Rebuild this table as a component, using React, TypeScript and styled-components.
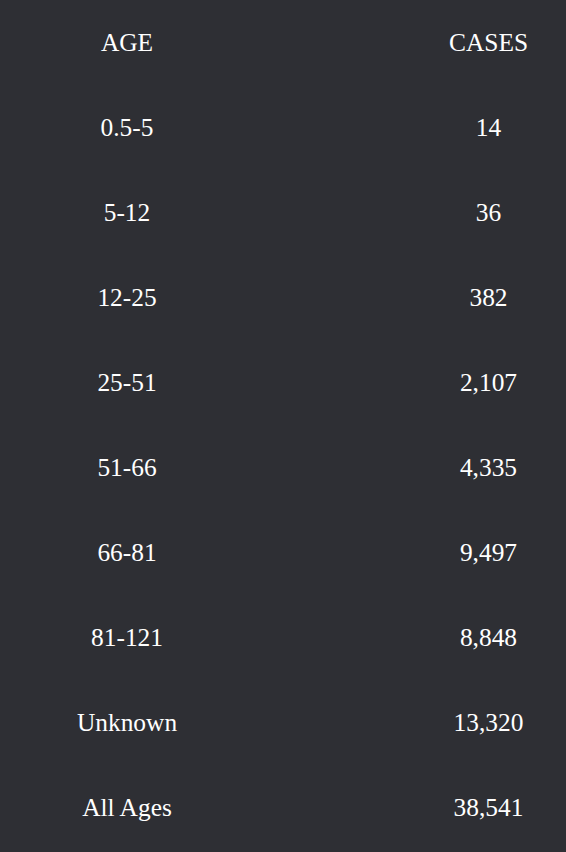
import React from "react";
import styled, { createGlobalStyle } from "styled-components";

const GlobalStyle = createGlobalStyle`
  html, body {
    margin: 0;
    padding: 0;
    background: #2e2f34;
  }
  body {
    font-family: "Liberation Serif", "Times New Roman", serif;
    color: #ffffff;
  }
`;

const Table = styled.div`
  display: flex;
  flex-direction: column;
  width: 566px;
  background: #2e2f34;
`;

const Row = styled.div`
  display: grid;
  grid-template-columns: 254px 155px;
  justify-content: space-between;
  align-items: center;
  height: 85px;
`;

const Cell = styled.div`
  text-align: center;
  font-size: 25.4px;
  color: #ffffff;
  white-space: nowrap;
`;

const rows: [string, string][] = [
  ["0.5-5", "14"],
  ["5-12", "36"],
  ["12-25", "382"],
  ["25-51", "2,107"],
  ["51-66", "4,335"],
  ["66-81", "9,497"],
  ["81-121", "8,848"],
  ["Unknown", "13,320"],
  ["All Ages", "38,541"],
];

export default function App() {
  return (
    <>
      <GlobalStyle />
      <Table>
        <Row>
          <Cell>AGE</Cell>
          <Cell>CASES</Cell>
        </Row>
        {rows.map(([age, cases]) => (
          <Row key={age}>
            <Cell>{age}</Cell>
            <Cell>{cases}</Cell>
          </Row>
        ))}
      </Table>
    </>
  );
}
